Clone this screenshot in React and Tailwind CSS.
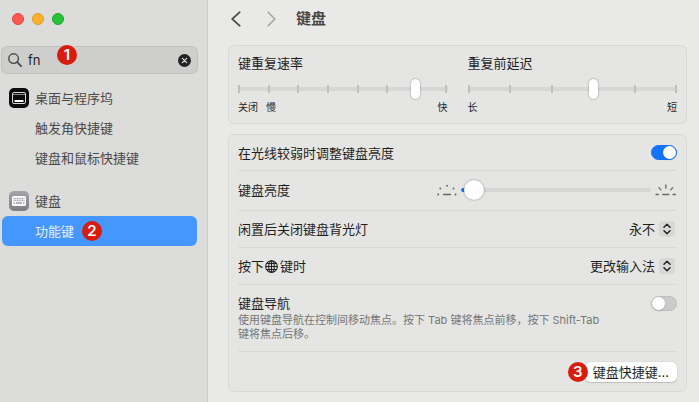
import { useState } from "react";

const Badge = ({ number, className }) => (
  <span
    className={`flex size-5 shrink-0 items-center justify-center rounded-full bg-[#d91c0e] text-[15px] font-semibold text-white ${className || ""}`}
  >
    {number}
  </span>
);

const SearchIcon = () => (
  <svg className="size-3.5 shrink-0" viewBox="0 0 14 14" fill="none" stroke="#4a4a49" strokeLinecap="round" aria-hidden="true">
    <circle cx="5.6" cy="5.6" r="4.8" strokeWidth="1.4" />
    <path d="M9.2 9.2l3.9 3.9" strokeWidth="1.7" />
  </svg>
);

const DockIcon = () => (
  <svg className="size-5 shrink-0" viewBox="0 0 20 20" fill="none" aria-hidden="true">
    <rect width="20" height="20" rx="5" fill="#0d0d0d" />
    <rect x="3.5" y="4.5" width="13" height="11" rx="1.5" stroke="#d8d8d8" />
    <path d="M4 6.5h12" stroke="#8a8a8a" />
    <rect x="5.5" y="12" width="9" height="2" fill="#fff" />
  </svg>
);

const KeyboardIcon = () => (
  <svg className="size-5 shrink-0" viewBox="0 0 20 20" fill="none" aria-hidden="true">
    <defs>
      <linearGradient id="kb" x1="0" y1="0" x2="0" y2="1">
        <stop stopColor="#a5a5a9" />
        <stop offset="1" stopColor="#7d7d82" />
      </linearGradient>
    </defs>
    <rect width="20" height="20" rx="5" fill="url(#kb)" />
    <rect x="3" y="5" width="14" height="10" rx="1.5" fill="#fff" />
    <path d="M4.5 7.5h11M4.5 9.5h11" stroke="#a9a9ad" strokeWidth="1.6" strokeDasharray="1.2 0.5" />
    <path d="M4.5 12h1.5M7 12h6M14 12h1.5" stroke="#a0a0a4" strokeWidth="1.4" />
  </svg>
);

const GlobeIcon = () => (
  <svg className="mr-0.5 ml-px size-[13px]" viewBox="0 0 13 13" fill="none" stroke="#222" strokeWidth="1.1" aria-hidden="true">
    <circle cx="6.5" cy="6.5" r="5.8" />
    <ellipse cx="6.5" cy="6.5" rx="2.8" ry="5.8" />
    <path d="M6.5 .7v11.6M.7 6.5h11.6M1.7 3.5h9.6M1.7 9.5h9.6" />
  </svg>
);

const DimIcon = () => (
  <svg className="h-3 w-5 shrink-0" viewBox="0 0 20 12" fill="none" stroke="#666665" strokeLinecap="round" aria-hidden="true">
    <path d="M6.5 10.5h7" strokeWidth="1.3" />
    <path d="M1.2 10.5h.01M18.5 10.5h.01M3.3 4.5h.01M16.5 4.5h.01M10 1.8h.01" strokeWidth="1.9" />
  </svg>
);

const BrightIcon = () => (
  <svg className="h-3 w-[22px] shrink-0" viewBox="0 0 22 12" fill="none" stroke="#6a6a69" strokeWidth="1.3" strokeLinecap="round" aria-hidden="true">
    <path d="M7.8 10.5h6M1 10.5h2.4M18 10.5h2.4M10.8 1v3.2M3.8 3.6l2.2 2.3M17.8 3.6l-2.2 2.3" />
  </svg>
);

const Stepper = ({ label, options }) => (
  <div className="mr-0.5 flex items-center gap-1">
    <select
      aria-label={label}
      className="field-sizing-content appearance-none bg-transparent text-right outline-none"
    >
      {options.map((o) => (
        <option key={o}>{o}</option>
      ))}
    </select>
    <svg className="pointer-events-none size-4" viewBox="0 0 16 16" fill="none" aria-hidden="true">
      <rect width="16" height="16" rx="4" fill="#d8d8d6" />
      <path d="M5 6.3l3-3 3 3M5 9.7l3 3 3-3" stroke="#222" strokeWidth="1.5" strokeLinecap="round" strokeLinejoin="round" />
    </svg>
  </div>
);

const Toggle = ({ id, checked, onChange }) => (
  <input
    id={id}
    type="checkbox"
    role="switch"
    checked={checked}
    onChange={(e) => onChange(e.target.checked)}
    className="flex h-[15px] w-[26px] shrink-0 appearance-none items-center rounded-full border border-[#bdbdbb] bg-[#cbcbc9] before:size-[13px] before:rounded-full before:bg-white before:shadow-sm checked:justify-end checked:border-[#1573f8] checked:bg-[#1573f8]"
  />
);

const TickSlider = ({ id, label, ticks, value, children }) => (
  <div className="flex flex-col">
    <label htmlFor={id} className="leading-5">{label}</label>
    <div className="mt-1 grid h-6 items-center">
      <div className="col-start-1 row-start-1 h-1 bg-[#d7d7d5]" />
      <div className="col-start-1 row-start-1 flex justify-between">
        {Array.from({ length: ticks }, (_, i) => (
          <span key={i} className="h-2 w-0.5 bg-[#bfbfbd]" />
        ))}
      </div>
      <input
        id={id}
        type="range"
        defaultValue={value}
        className="z-10 col-start-1 row-start-1 -mx-1 h-5 appearance-none bg-transparent [&::-webkit-slider-thumb]:h-5 [&::-webkit-slider-thumb]:w-[9px] [&::-webkit-slider-thumb]:appearance-none [&::-webkit-slider-thumb]:rounded-full [&::-webkit-slider-thumb]:bg-white [&::-webkit-slider-thumb]:shadow-[0_0_2px_rgba(0,0,0,0.45)]"
      />
    </div>
    <div className="flex justify-between text-[10px] leading-3">{children}</div>
  </div>
);

const sidebar = [
  { title: "桌面与程序坞", icon: <DockIcon />, items: ["触发角快捷键", "键盘和鼠标快捷键"] },
  { title: "键盘", icon: <KeyboardIcon />, items: ["功能键"] },
];

const App = () => {
  const [query, setQuery] = useState("fn");
  const [autoLight, setAutoLight] = useState(true);
  const [navigation, setNavigation] = useState(false);

  return (
    <div className="flex min-h-screen bg-[#e9e9e7] font-['Inter','Noto_Sans_CJK_SC',sans-serif] text-[13px] leading-5 text-[#1f1f1f]">
      {/* SIDEBAR */}
      <aside className="w-52 shrink-0 border-r border-[#cacac8] bg-[#dcdcda] pt-[13px]">
        <div className="flex gap-2 pl-3">
          <button aria-label="关闭" className="size-3 rounded-full border border-[#e0443e] bg-[#ff5650]" />
          <button aria-label="最小化" className="size-3 rounded-full border border-[#dd9a22] bg-[#fdb02b]" />
          <button aria-label="缩放" className="size-3 rounded-full border border-[#1aa82b] bg-[#28c236]" />
        </div>

        <div className="relative mt-[21px] mr-[9px] ml-px flex h-7 items-center rounded-md border border-[#c2c2c0] bg-[#cececc] px-1.5">
          <SearchIcon />
          <input
            aria-label="搜索"
            value={query}
            onChange={(e) => setQuery(e.target.value)}
            className="ml-1.5 min-w-0 flex-1 bg-transparent outline-none"
          />
          <button aria-label="清除" onClick={() => setQuery("")} className="shrink-0">
            <svg className="size-[13px]" viewBox="0 0 13 13" fill="none" aria-hidden="true">
              <circle cx="6.5" cy="6.5" r="6.5" fill="#222" />
              <path d="M4.3 4.3l4.4 4.4M8.7 4.3L4.3 8.7" stroke="#dcdcda" strokeWidth="1.2" strokeLinecap="round" />
            </svg>
          </button>
          <Badge number={1} className="absolute -top-0.5 left-[55px]" />
        </div>

        <nav className="mt-[9px] flex flex-col gap-[13px] text-[#4a4a49]">
          {sidebar.map((group) => (
            <div key={group.title}>
              <a href="#" className="flex h-[30px] items-center gap-1.5 pl-[9px]">
                {group.icon}
                {group.title}
              </a>
              {group.items.map((item) =>
                item === "功能键" ? (
                  <a
                    key={item}
                    href="#"
                    aria-current="page"
                    className="mr-2.5 ml-0.5 flex h-[30px] items-center gap-2 rounded-md bg-[#4597fd] pl-[33px] text-[#e3effd]"
                  >
                    {item}
                    <Badge number={2} />
                  </a>
                ) : (
                  <a key={item} href="#" className="flex h-[30px] items-center pl-[35px]">
                    {item}
                  </a>
                )
              )}
            </div>
          ))}
        </nav>
      </aside>

      {/* CONTENT */}
      <main className="min-w-0 flex-1 pt-2 pr-3 pb-2.5 pl-5">
        <header className="flex h-[22px] items-center">
          <button aria-label="后退" className="ml-[3px]">
            <svg className="h-4 w-2.5" viewBox="0 0 10 16" fill="none" aria-hidden="true">
              <path d="M8.8 1.2L1.2 8l7.6 6.8" stroke="#4b4b4a" strokeWidth="1.7" strokeLinecap="round" strokeLinejoin="round" />
            </svg>
          </button>
          <button aria-label="前进" className="ml-[26px]">
            <svg className="h-4 w-2.5" viewBox="0 0 10 16" fill="none" aria-hidden="true">
              <path d="M1.2 1.2L7.9 8l-6.7 6.8" stroke="#a5a5a4" strokeWidth="1.6" strokeLinecap="round" strokeLinejoin="round" />
            </svg>
          </button>
          <h1 className="ml-[19px] text-[15px] font-bold text-[#474746]">键盘</h1>
        </header>

        <section className="mt-[15px] grid grid-cols-2 gap-5 rounded-md border border-[#d9d9d7] bg-[#e5e5e3] px-[9px] pt-[7px] pb-[10px]">
          <TickSlider id="rate" label="键重复速率" ticks={8} value={85}>
            <span className="flex gap-2">
              <span>关闭</span>
              <span>慢</span>
            </span>
            <span>快</span>
          </TickSlider>
          <TickSlider id="delay" label="重复前延迟" ticks={6} value={60}>
            <span>长</span>
            <span>短</span>
          </TickSlider>
        </section>

        <section className="mt-2.5 rounded-md border border-[#d9d9d7] bg-[#e5e5e3] px-[9px]">
          <div className="flex h-9 items-center justify-between border-b border-[#d9d9d7]">
            <label htmlFor="auto">在光线较弱时调整键盘亮度</label>
            <Toggle id="auto" checked={autoLight} onChange={setAutoLight} />
          </div>

          <div className="flex h-10 items-center border-b border-[#d9d9d7] pb-0.5">
            <label htmlFor="brightness" className="flex-1">键盘亮度</label>
            <DimIcon />
            <input
              id="brightness"
              type="range"
              defaultValue={2}
              className="mx-1 h-5 w-[190px] appearance-none bg-transparent [&::-webkit-slider-runnable-track]:h-1 [&::-webkit-slider-runnable-track]:rounded-full [&::-webkit-slider-runnable-track]:bg-[linear-gradient(to_right,#1573f8_12px,#d5d5d3_12px)] [&::-webkit-slider-thumb]:-mt-2 [&::-webkit-slider-thumb]:size-5 [&::-webkit-slider-thumb]:appearance-none [&::-webkit-slider-thumb]:rounded-full [&::-webkit-slider-thumb]:bg-white [&::-webkit-slider-thumb]:shadow-[0_0_2px_rgba(0,0,0,0.45)]"
            />
            <BrightIcon />
          </div>

          <div className="flex h-[37px] items-center justify-between border-b border-[#d9d9d7]">
            <span>闲置后关闭键盘背光灯</span>
            <Stepper label="闲置后关闭键盘背光灯" options={["永不"]} />
          </div>

          <div className="flex h-[37px] items-center justify-between border-b border-[#d9d9d7]">
            <span className="flex items-center">
              按下
              <GlobeIcon />
              键时
            </span>
            <Stepper label="按下地球键时" options={["更改输入法"]} />
          </div>

          <div className="flex items-start justify-between border-b border-[#d9d9d7] pt-2 pb-[10px]">
            <div>
              <label htmlFor="navigation">键盘导航</label>
              <p className="max-w-[370px] text-[11px] leading-[14px] text-[#777776]">
                使用键盘导航在控制间移动焦点。按下 Tab 键将焦点前移，按下 Shift-Tab 键将焦点后移。
              </p>
            </div>
            <div className="pt-[3px]">
              <Toggle id="navigation" checked={navigation} onChange={setNavigation} />
            </div>
          </div>

          <div className="flex h-[39px] items-center justify-end">
            <Badge number={3} className="z-10 -mr-[3px]" />
            <button className="h-5 rounded-[5px] bg-white px-2 shadow-[0_0_1px_rgba(0,0,0,0.3),0_1px_1px_rgba(0,0,0,0.15)]">
              键盘快捷键...
            </button>
          </div>
        </section>
      </main>
    </div>
  );
};

export default App;
